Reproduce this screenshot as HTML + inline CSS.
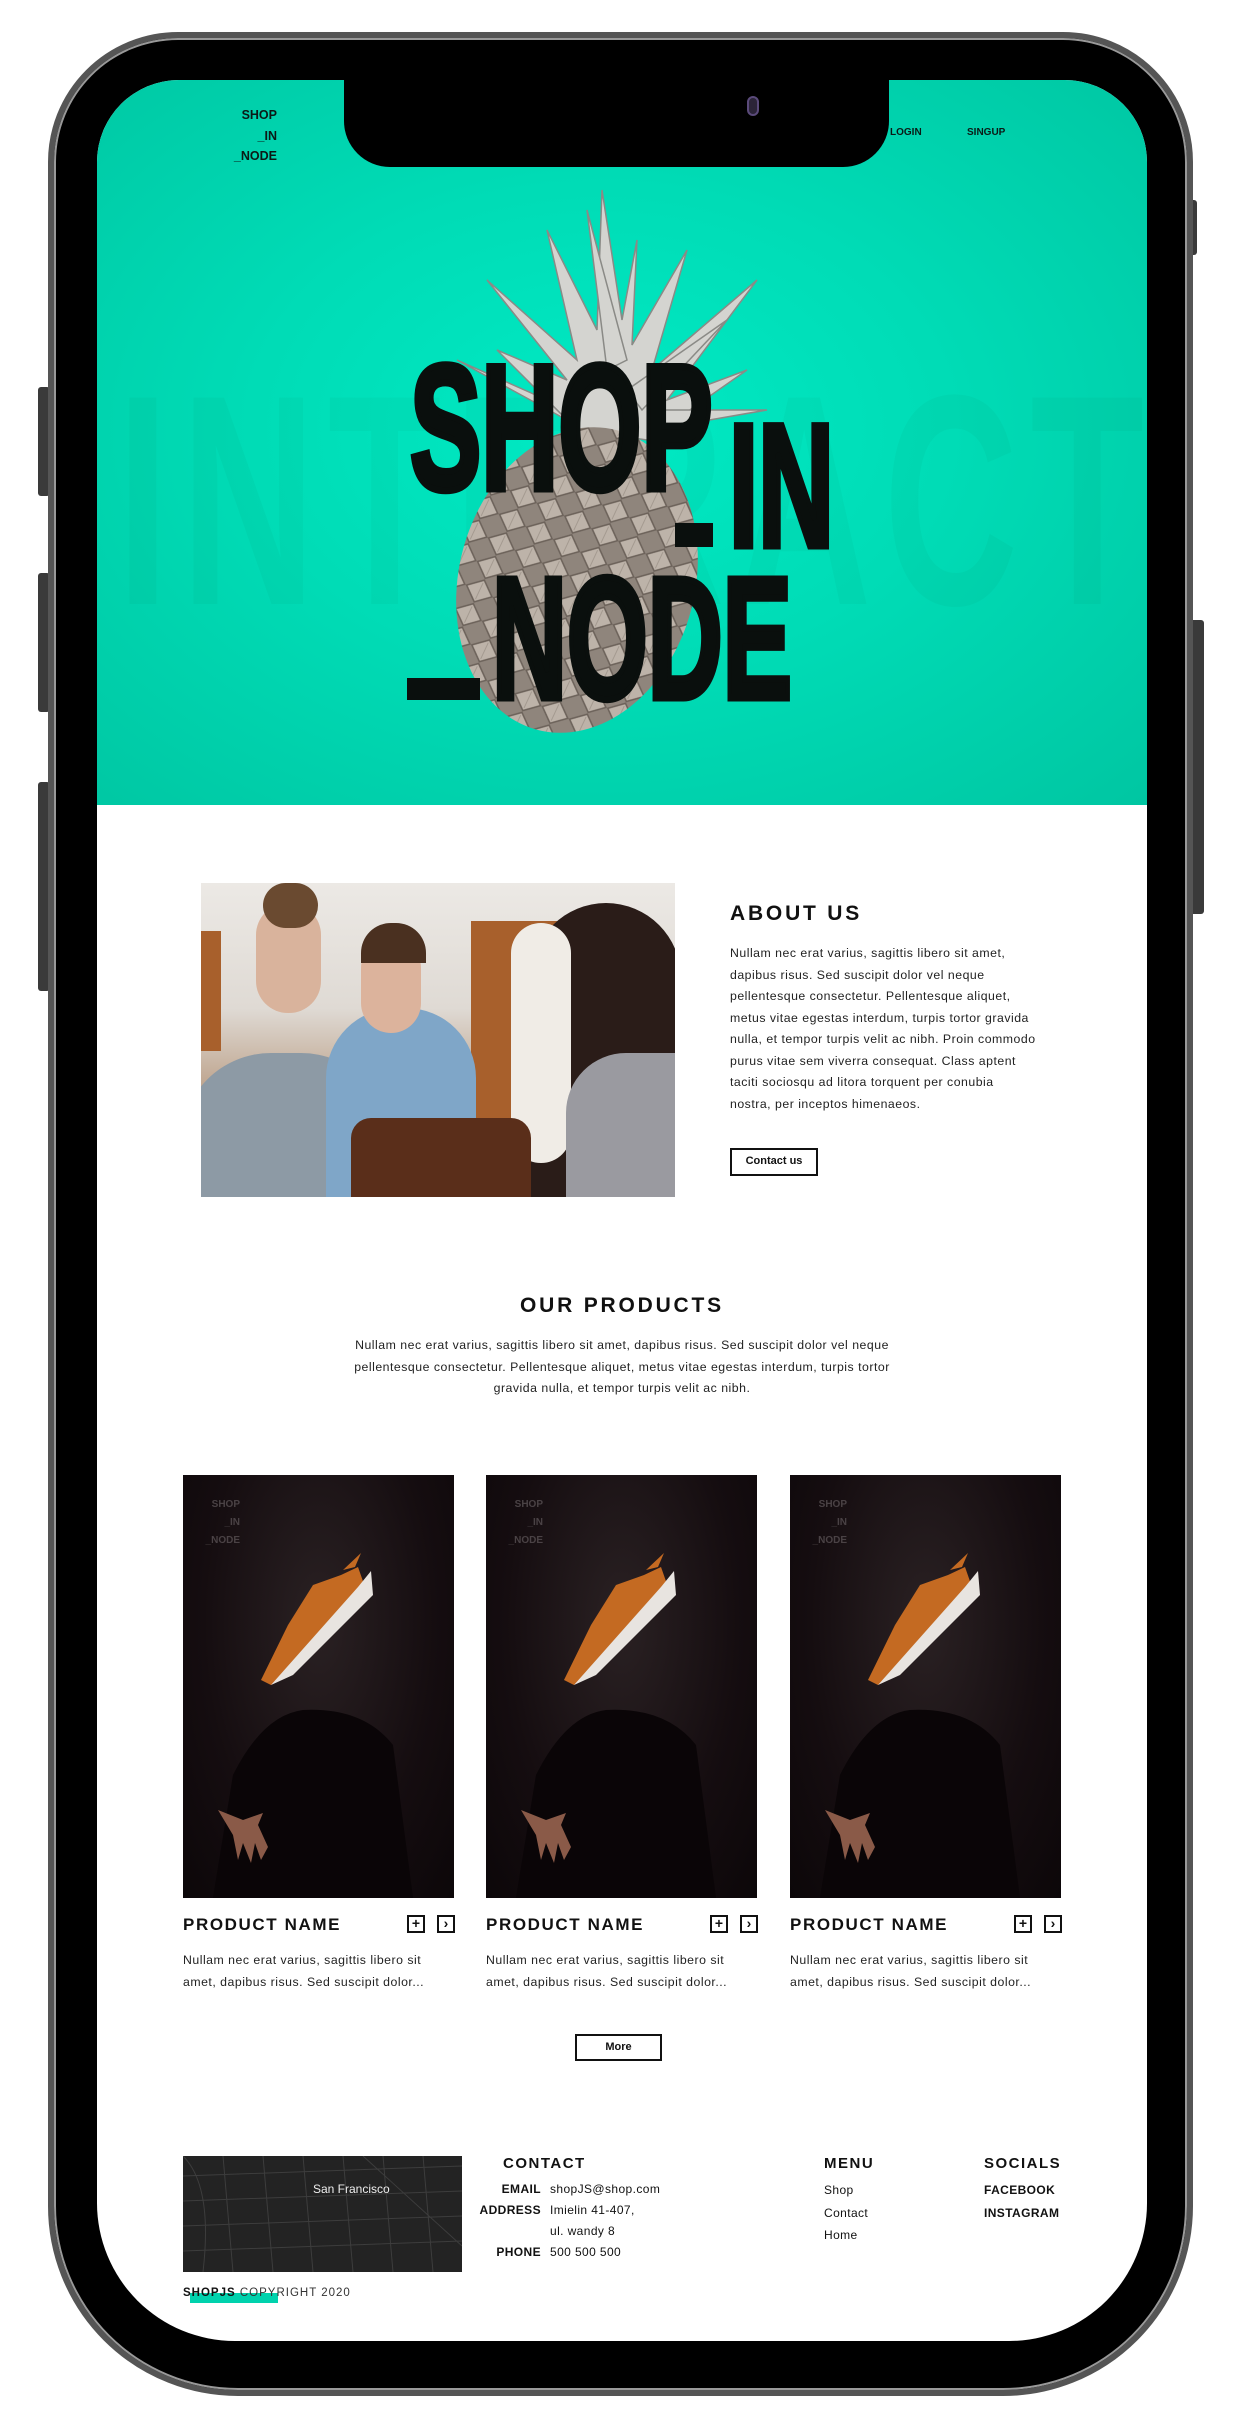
<!DOCTYPE html>
<html><head><meta charset="utf-8">
<style>
*{margin:0;padding:0;box-sizing:border-box}
body{width:1257px;height:2428px;background:#fff;position:relative;overflow:hidden;font-family:"Liberation Sans",sans-serif;color:#111}
.abs{position:absolute}
.frame{left:48px;top:32px;width:1145px;height:2364px;border-radius:130px 130px 190px 190px;background:#000;border:6px solid #555;box-shadow:0 0 0 2px #999 inset}
.screen{left:97px;top:80px;width:1050px;height:2261px;background:#fff;border-radius:82px 82px 138px 138px;overflow:hidden}
.hero{left:0;top:0;width:1050px;height:725px;background:radial-gradient(ellipse at 48% 48%,#00eac4 0%,#00dcb6 45%,#00c6a2 100%)}
.notch{left:247px;top:0;width:545px;height:87px;background:#000;border-radius:0 0 46px 46px}
.btn{position:absolute;background:#3a3a3a;border-radius:3px}
.big{font-weight:bold;color:#0a0f0d;position:absolute;line-height:1;transform-origin:0 0;white-space:nowrap;-webkit-text-stroke:7px #0a0f0d}
.bar{position:absolute;background:#0a0f0d}
.p{font-size:12.3px;line-height:21.5px;color:#222;letter-spacing:.5px}
h2{font-size:21px;letter-spacing:2.8px;font-weight:900}
.card{top:1395px;width:271px;height:423px;background:radial-gradient(ellipse at 50% 35%,#2a2123 0%,#150d10 60%,#0c0709 100%);overflow:hidden}
.pname{font-size:17px;font-weight:900;letter-spacing:1.6px}
.ib{position:absolute;width:18px;height:18px;border:2px solid #111;font-size:14px;line-height:13px;text-align:center;font-weight:bold}
.outbtn{position:absolute;border:2.5px solid #111;font-size:11px;font-weight:bold;text-align:center}
.f{font-size:12px;line-height:21px;letter-spacing:.4px}
</style></head><body>
<div class="btn" style="left:38px;top:387px;width:12px;height:109px"></div>
<div class="btn" style="left:38px;top:573px;width:12px;height:139px"></div>
<div class="btn" style="left:38px;top:782px;width:12px;height:209px"></div>
<div class="btn" style="left:1190px;top:620px;width:14px;height:294px"></div>
<div class="btn" style="left:1188px;top:200px;width:9px;height:55px"></div>
<div class="abs frame"></div>
<div class="abs screen">
  <div class="abs hero">
    <div class="abs" style="left:20px;top:270px;font-size:300px;font-weight:bold;color:rgba(0,50,40,0.035);white-space:nowrap;transform:scaleX(.62);transform-origin:0 0;letter-spacing:20px;line-height:1">INTERACTIVE</div>
    <svg class="abs" style="left:330px;top:90px" width="360" height="580" viewBox="0 0 360 580">
      <g fill="#d4d4d0" stroke="#8a8a86" stroke-width="1.5">
        <path d="M150 260 L70 180 L140 210 L60 110 L150 190 L120 60 L170 160 L175 20 L195 150 L210 70 L205 175 L260 80 L225 200 L330 110 L240 230 L320 200 L220 270 Z"/>
        <path d="M120 230 L30 190 L140 250 Z M230 240 L340 240 L225 260 Z M180 200 L160 40 L200 190 Z M200 220 L300 150 L215 240 Z"/>
      </g>
      <defs><pattern id="pp" width="30" height="26" patternUnits="userSpaceOnUse" patternTransform="rotate(10)">
        <rect width="30" height="26" fill="#8f857c"/>
        <path d="M1 13 L15 1 L29 13 L15 25 Z" fill="#bdb3a9" stroke="#6c625a" stroke-width="1.5"/>
        <path d="M15 4 L15 22" stroke="#a49a90" stroke-width="1"/>
      </pattern></defs>
      <ellipse cx="150" cy="410" rx="118" ry="155" fill="url(#pp)" transform="rotate(15 150 410)"/>
    </svg>
    <div class="big" style="left:313px;top:259px;font-size:178px;transform:scaleX(.6)">SHOP</div>
    <div class="bar" style="left:578px;top:443px;width:38px;height:24px"></div>
    <div class="big" style="left:632px;top:319px;font-size:175px;transform:scaleX(.6)">IN</div>
    <div class="bar" style="left:310px;top:598px;width:73px;height:22px"></div>
    <div class="big" style="left:395px;top:472px;font-size:173px;transform:scaleX(.6)">NODE</div>
    <div class="abs" style="left:118px;top:25px;width:62px;text-align:right;font-size:12.5px;font-weight:bold;line-height:20.5px;color:#0b1a16">SHOP<br>_IN<br>_NODE</div>
    <div class="abs" style="left:793px;top:47px;font-size:10px;font-weight:bold;color:#0b1a16">LOGIN</div>
    <div class="abs" style="left:870px;top:47px;font-size:10px;font-weight:bold;color:#0b1a16">SINGUP</div>
  </div>
  <div class="abs notch"><div class="abs" style="left:403px;top:16px;width:12px;height:20px;border-radius:6px;background:#2b2438;border:2px solid #5a4a7a"></div></div>

  <div class="abs" style="left:104px;top:803px;width:474px;height:314px;background:linear-gradient(180deg,#ece9e5 0%,#dfdad4 40%,#b89a80 70%,#3a2418 100%);overflow:hidden">
    <div class="abs" style="left:270px;top:38px;width:100px;height:200px;background:#a8602c"></div>
    <div class="abs" style="left:0;top:48px;width:20px;height:120px;background:#a8602c"></div>
    <div class="abs" style="left:-20px;top:170px;width:210px;height:170px;border-radius:90px 90px 0 0;background:#8d9aa5"></div>
    <div class="abs" style="left:55px;top:20px;width:65px;height:110px;border-radius:32px;background:#d9b39c"></div>
    <div class="abs" style="left:62px;top:0;width:55px;height:45px;border-radius:28px;background:#6a4a30"></div>
    <div class="abs" style="left:125px;top:125px;width:150px;height:200px;border-radius:70px 70px 0 0;background:#7fa6c8"></div>
    <div class="abs" style="left:160px;top:55px;width:60px;height:95px;border-radius:30px;background:#dcb39c"></div>
    <div class="abs" style="left:160px;top:40px;width:65px;height:40px;border-radius:30px 30px 0 0;background:#4a3020"></div>
    <div class="abs" style="left:330px;top:20px;width:150px;height:300px;border-radius:75px 75px 0 0;background:#2a1c18"></div>
    <div class="abs" style="left:310px;top:40px;width:60px;height:240px;border-radius:30px;background:#f0ece6"></div>
    <div class="abs" style="left:365px;top:170px;width:120px;height:150px;border-radius:60px 0 0 0;background:#9a9aa0"></div>
    <div class="abs" style="left:150px;top:235px;width:180px;height:90px;background:#5a2e1a;border-radius:20px 20px 0 0"></div>
  </div>
  <h2 class="abs" style="left:633px;top:822px">ABOUT US</h2>
  <div class="abs p" style="left:633px;top:863px;width:306px">Nullam nec erat varius, sagittis libero sit amet, dapibus risus. Sed suscipit dolor vel neque pellentesque consectetur. Pellentesque aliquet, metus vitae egestas interdum, turpis tortor gravida nulla, et tempor turpis velit ac nibh. Proin commodo purus vitae sem viverra consequat. Class aptent taciti sociosqu ad litora torquent per conubia nostra, per inceptos himenaeos.</div>
  <div class="outbtn" style="left:633px;top:1068px;width:88px;height:28px;line-height:23px">Contact us</div>

  <h2 class="abs" style="left:0;width:1050px;text-align:center;top:1214px">OUR PRODUCTS</h2>
  <div class="abs p" style="left:235px;top:1255px;width:580px;text-align:center">Nullam nec erat varius, sagittis libero sit amet, dapibus risus. Sed suscipit dolor vel neque pellentesque consectetur. Pellentesque aliquet, metus vitae egestas interdum, turpis tortor gravida nulla, et tempor turpis velit ac nibh.</div>

  <div class="abs card" style="left:86px"></div>
  <div class="abs card" style="left:389px"></div>
  <div class="abs card" style="left:693px"></div>
  <div class="abs" style="left:86px;top:1395px;width:900px;height:423px">
    <svg class="abs" style="left:0;top:0" width="900" height="423">
      <defs><g id="cc">
        <text x="57" y="32" font-size="10" font-weight="bold" fill="#4a4245" text-anchor="end" font-family="Liberation Sans">SHOP</text>
        <text x="57" y="50" font-size="10" font-weight="bold" fill="#4a4245" text-anchor="end" font-family="Liberation Sans">_IN</text>
        <text x="57" y="68" font-size="10" font-weight="bold" fill="#4a4245" text-anchor="end" font-family="Liberation Sans">_NODE</text>
        <path d="M78 205 L105 150 L130 110 L158 100 L175 92 L182 112 L160 140 L120 185 L88 210 Z" fill="#c46a22"/>
        <path d="M88 210 L175 112 L188 96 L190 120 L160 150 L110 200 Z" fill="#e8e4e0"/>
        <path d="M160 95 L178 78 L172 92 Z" fill="#c46a22"/>
        <path d="M50 300 Q80 240 120 235 Q180 232 210 270 L230 423 L30 423 Z" fill="#0a0507"/>
        <path d="M35 335 L60 345 L80 338 L75 350 L85 372 L78 385 L72 368 L68 388 L60 368 L55 385 L50 360 Z" fill="#8a5a48"/>
      </g></defs>
      <use href="#cc" x="0"/><use href="#cc" x="303"/><use href="#cc" x="607"/>
    </svg>
  </div>
  <div class="abs pname" style="left:86px;top:1835px">PRODUCT NAME</div>
  <div class="ib" style="left:310px;top:1835px">+</div><div class="ib" style="left:340px;top:1835px">›</div>
  <div class="abs pname" style="left:389px;top:1835px">PRODUCT NAME</div>
  <div class="ib" style="left:613px;top:1835px">+</div><div class="ib" style="left:643px;top:1835px">›</div>
  <div class="abs pname" style="left:693px;top:1835px">PRODUCT NAME</div>
  <div class="ib" style="left:917px;top:1835px">+</div><div class="ib" style="left:947px;top:1835px">›</div>
  <div class="abs p" style="left:86px;top:1870px;width:262px">Nullam nec erat varius, sagittis libero sit amet, dapibus risus. Sed suscipit dolor...</div>
  <div class="abs p" style="left:389px;top:1870px;width:262px">Nullam nec erat varius, sagittis libero sit amet, dapibus risus. Sed suscipit dolor...</div>
  <div class="abs p" style="left:693px;top:1870px;width:262px">Nullam nec erat varius, sagittis libero sit amet, dapibus risus. Sed suscipit dolor...</div>
  <div class="outbtn" style="left:478px;top:1954px;width:87px;height:27px;line-height:22px">More</div>

  <div class="abs" style="left:86px;top:2076px;width:279px;height:116px;background:#232323;overflow:hidden">
    <svg width="279" height="116"><g stroke="#3d3d3d" stroke-width="1" fill="none"><path d="M0 20 L279 10 M0 45 L279 35 M0 70 L279 60 M0 95 L279 85 M40 0 L50 116 M80 0 L90 116 M120 0 L130 116 M160 0 L170 116 M200 0 L210 116 M240 0 L250 116 M180 0 L279 90 M0 0 Q30 30 20 116"/></g></svg>
    <div class="abs" style="left:130px;top:26px;font-size:12px;color:#eee">San Francisco</div>
  </div>
  <div class="abs" style="left:406px;top:2075px;font-size:15px;font-weight:900;letter-spacing:1.5px">CONTACT</div>
  <div class="abs f" style="left:364px;top:2099px;width:80px;text-align:right;font-weight:bold">EMAIL<br>ADDRESS<br>&nbsp;<br>PHONE</div>
  <div class="abs f" style="left:453px;top:2099px">shopJS@shop.com<br>Imielin 41-407,<br>ul. wandy 8<br>500 500 500</div>
  <div class="abs" style="left:727px;top:2075px;font-size:15px;font-weight:900;letter-spacing:1.5px">MENU</div>
  <div class="abs f" style="left:727px;top:2099px;line-height:22.5px">Shop<br>Contact<br>Home</div>
  <div class="abs" style="left:887px;top:2075px;font-size:15px;font-weight:900;letter-spacing:1.5px">SOCIALS</div>
  <div class="abs f" style="left:887px;top:2099px;line-height:22.5px;font-weight:bold">FACEBOOK<br>INSTAGRAM</div>
  <div class="abs" style="left:93px;top:2213px;width:88px;height:10px;background:#00d2ad"></div>
  <div class="abs" style="left:86px;top:2207px;font-size:11.5px;letter-spacing:1px;color:#333"><b style="color:#111">SHOPJS</b> COPYRIGHT 2020</div>
</div>
</body></html>
